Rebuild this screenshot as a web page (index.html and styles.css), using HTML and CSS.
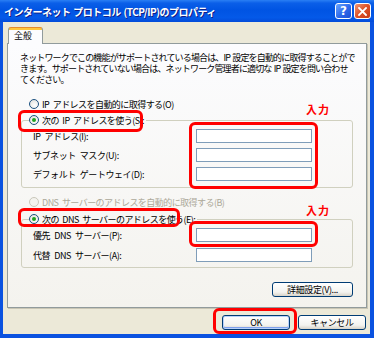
FILE: index.html
```html
<!DOCTYPE html>
<html lang="ja">
<head>
<meta charset="utf-8">
<title>インターネット プロトコル (TCP/IP)のプロパティ</title>
<link rel="stylesheet" href="styles.css">
</head>
<body>
<div class="window">
  <div class="titlebar">
    <span class="title">インターネット プロトコル (TCP/IP)のプロパティ</span>
    <div class="tb-buttons">
      <span class="tb-btn help">?</span>
      <span class="tb-btn close"><svg width="9" height="9" viewBox="0 0 9 9"><path d="M1 1 L8 8 M8 1 L1 8" stroke="#fff" stroke-width="1.8" stroke-linecap="square"/></svg></span>
    </div>
  </div>
  <div class="client">
    <div class="tabs"><div class="tab">全般</div></div>
    <div class="panel">
      <p class="desc">ネットワークでこの機能がサポートされている場合は、IP 設定を自動的に取得することがで<br>きます。サポートされていない場合は、ネットワーク管理者に適切な IP 設定を問い合わせ<br>てください。</p>
      <div class="radio-row r-auto"><span class="radio"></span><span>IP アドレスを自動的に取得する(O)</span></div>
      <fieldset class="group g-ip">
        <legend><span class="radio-row"><span class="radio checked"></span><span>次の IP アドレスを使う(S):</span></span></legend>
        <div class="field"><span class="lbl">IP アドレス(I):</span><span class="input"></span></div>
        <div class="field"><span class="lbl">サブネット マスク(U):</span><span class="input"></span></div>
        <div class="field"><span class="lbl">デフォルト ゲートウェイ(D):</span><span class="input"></span></div>
      </fieldset>
      <div class="radio-row r-dns disabled"><span class="radio"></span><span>DNS サーバーのアドレスを自動的に取得する(B)</span></div>
      <fieldset class="group g-dns">
        <legend><span class="radio-row"><span class="radio checked"></span><span>次の DNS サーバーのアドレスを使う(E):</span></span></legend>
        <div class="field"><span class="lbl">優先 DNS サーバー(P):</span><span class="input"></span></div>
        <div class="field"><span class="lbl">代替 DNS サーバー(A):</span><span class="input"></span></div>
      </fieldset>
      <div class="adv-row"><button class="btn adv">詳細設定(V)...</button></div>
    </div>
    <div class="footer">
      <button class="btn default">OK</button>
      <button class="btn">キャンセル</button>
    </div>
  </div>
  <div class="mark m1"></div>
  <div class="mark m2"></div>
  <div class="mark m3"></div>
  <div class="mark m4"></div>
  <div class="mark m5"></div>
  <div class="note n1">入力</div>
  <div class="note n2">入力</div>
</div>
</body>
</html>
```
FILE: styles.css
```css
* { box-sizing: border-box; }
html, body { margin: 0; padding: 0; }
body {
  width: 374px;
  height: 338px;
  overflow: hidden;
  font-family: "Noto Sans CJK JP", "Noto Sans", sans-serif;
  font-size: 9px;
  color: #000;
}
.window {
  position: relative;
  width: 374px;
  height: 338px;
  background: #0A52E0;
  display: flex;
  flex-direction: column;
}
.titlebar {
  height: 22px;
  flex: none;
  display: flex;
  align-items: center;
  padding: 0 3px 0 4px;
  background: linear-gradient(#2A7FF4 0%, #0B5FE8 14%, #0054E3 45%, #0459E8 80%, #034BD9 100%);
}
.title {
  flex: 1;
  color: #fff;
  font-weight: bold;
  font-size: 10px;
  letter-spacing: -0.5px;
  word-spacing: 1px;
  white-space: nowrap;
  text-shadow: 1px 1px 0 #0F1E88;
}
.tb-buttons { display: flex; gap: 2px; }
.tb-btn {
  width: 17px;
  height: 16px;
  border: 1px solid #fff;
  border-radius: 3px;
  display: flex;
  align-items: center;
  justify-content: center;
}
.help {
  background: linear-gradient(135deg, #6AA6FF 0%, #2D68EA 55%, #1C4ED4 100%);
  color: #fff;
  font: bold 12px "DejaVu Sans", sans-serif;
}
.close {
  background: linear-gradient(135deg, #F09775 0%, #DE5127 50%, #C43A17 100%);
}
.client {
  flex: 1;
  margin: 0 4px 4px 3px;
  background: #ECE9D8;
  display: flex;
  flex-direction: column;
}
.tabs {
  display: flex;
  padding: 5px 0 0 5px;
  position: relative;
  z-index: 1;
}
.tab {
  width: 35px;
  height: 17px;
  margin-bottom: -1px;
  border: 1px solid #919B9C;
  border-bottom: none;
  border-top-color: #E68B2C;
  border-radius: 3px 3px 0 0;
  background: linear-gradient(#FFC73C 0 2px, #FCFCFE 2px);
  padding: 2px 0 0 5px;
  line-height: 11px;
}
.panel {
  margin: 0 3px 0 4px;
  height: 265px;
  flex: none;
  border: 1px solid #919B9C;
  background: linear-gradient(#FCFCFE, #F4F3EE);
  box-shadow: 1px 1px 0 #C9C6B5;
  display: flex;
  flex-direction: column;
}
.desc {
  margin: 8px 0 0 12px;
  line-height: 11px;
  letter-spacing: -0.85px;
  word-spacing: 1px;
  white-space: nowrap;
}
.radio-row {
  display: flex;
  align-items: center;
  height: 12px;
  gap: 3px;
  white-space: nowrap;
  letter-spacing: -0.55px;
  word-spacing: 2px;
}
.radio {
  width: 10px;
  height: 10px;
  flex: none;
  border-radius: 50%;
  border: 1px solid #1C5180;
  background: radial-gradient(circle at 60% 65%, #FFFFFF 0%, #DCDCD7 100%);
  display: flex;
  align-items: center;
  justify-content: center;
}
.radio.checked::after {
  content: "";
  width: 4px;
  height: 4px;
  border-radius: 50%;
  background: #21A121;
}
.r-auto { margin: 13px 0 0 21px; }
.r-dns { margin: 8px 0 0 21px; color: #ACA899; }
.r-dns .radio { border-color: #C9C7BA; background: #F4F3EE; }
.group {
  margin: 0 13px;
  min-width: 0;
  border: 1px solid #D0D0BF;
  border-radius: 3px;
}
.group legend {
  padding: 0 2px 0 0;
  margin-left: -4px;
}
.g-ip { margin-top: 4px; padding: 3px 0 6px 11px; }
.g-dns { margin-top: 5px; padding: 3px 0 5px 11px; }
.field {
  display: flex;
  align-items: center;
  height: 14px;
  letter-spacing: -0.45px;
  word-spacing: 2.5px;
  white-space: nowrap;
}
.g-ip .field + .field { margin-top: 5px; }
.g-dns .field + .field { margin-top: 6px; }
.lbl { width: 163px; flex: none; }
.input {
  width: 116px;
  height: 14px;
  flex: none;
  border: 1px solid #7F9DB9;
  background: #fff;
}
.adv-row {
  display: flex;
  justify-content: flex-end;
  margin: 14px 13px 0 0;
}
.btn {
  height: 15px;
  padding: 0;
  border: 1px solid #003C74;
  border-radius: 3px;
  background: linear-gradient(#FFFFFF 0%, #F3F3EF 70%, #D8D3C8 100%);
  font-family: "Noto Sans CJK JP", "Noto Sans", sans-serif;
  font-size: 9px;
  line-height: 13px;
  letter-spacing: -0.4px;
  color: #000;
}
.adv { width: 81px; }
.footer {
  display: flex;
  justify-content: flex-end;
  gap: 8px;
  margin-top: 7px;
  padding-right: 4px;
}
.footer .btn { width: 68px; }
.btn.default {
  box-shadow: inset 0 0 0 1px #B9D1FA, inset 0 -1px 0 1px #7FA0EC;
}
.mark {
  position: absolute;
  border: 3px solid #FF0000;
  border-radius: 6px;
}
.m1 { left: 18px; top: 110px; width: 125px; height: 22px; }
.m2 { left: 18px; top: 208px; width: 162px; height: 19px; }
.m3 { left: 189px; top: 122px; width: 129px; height: 67px; }
.m4 { left: 189px; top: 221px; width: 129px; height: 26px; }
.m5 { left: 213px; top: 308px; width: 84px; height: 26px; }
.note {
  position: absolute;
  color: #FF0000;
  font-weight: bold;
  font-size: 11px;
  line-height: 12px;
  letter-spacing: 1px;
}
.n1 { left: 306px; top: 103px; }
.n2 { left: 306px; top: 204px; }
```
